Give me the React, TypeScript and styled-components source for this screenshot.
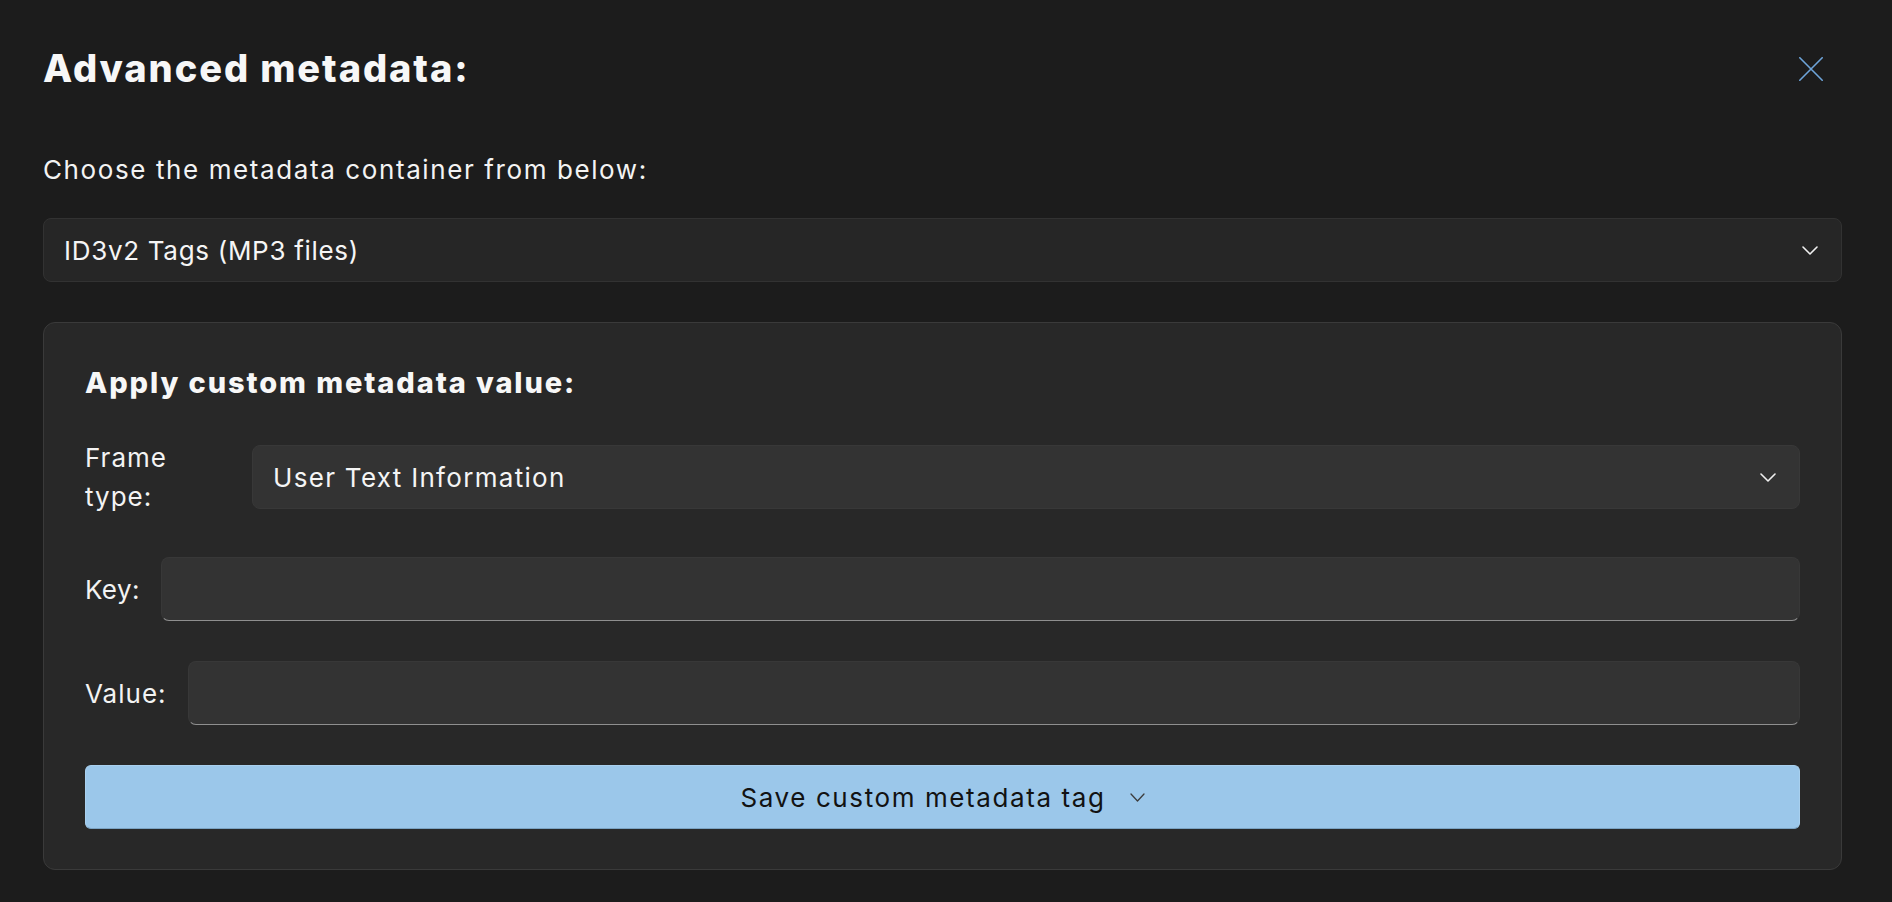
import React from "react";
import styled, { createGlobalStyle } from "styled-components";

const GlobalStyle = createGlobalStyle`
  html, body {
    margin: 0;
    padding: 0;
    background: #1c1c1c;
  }
  body {
    font-family: Inter, "Noto Sans", "Liberation Sans", sans-serif;
    color: #f5f5f5;
  }
  * { box-sizing: border-box; }
`;

const Page = styled.div`
  width: 1892px;
  min-height: 902px;
  padding: 44px 50px 0 43px;
  background: #1c1c1c;
  display: flex;
  flex-direction: column;
`;

const Header = styled.div`
  display: flex;
  align-items: center;
  justify-content: space-between;
`;

const Title = styled.h1`
  margin: 0;
  font-size: 38px;
  line-height: 49px;
  font-weight: 800;
  letter-spacing: 1.9px;
  color: #f7f7f7;
`;

const CloseButton = styled.button`
  width: 40px;
  height: 40px;
  margin-right: 11px;
  padding: 0;
  border: none;
  background: transparent;
  display: flex;
  align-items: center;
  justify-content: center;
  cursor: pointer;
`;

const Intro = styled.p`
  margin: 57px 0 0;
  font-size: 26px;
  line-height: 39px;
  font-weight: 400;
  letter-spacing: 1.6px;
  color: #f3f3f3;
`;

const SelectBox = styled.div<{ $tone: "dark" | "light" }>`
  height: 64px;
  flex: 1;
  display: flex;
  align-items: center;
  justify-content: space-between;
  padding: 0 23px 0 20px;
  border-radius: 8px;
  font-size: 26px;
  line-height: 39px;
  letter-spacing: ${(p) => (p.$tone === "dark" ? "0.7px" : "1.3px")};
  color: #f5f5f5;
  background: ${(p) => (p.$tone === "dark" ? "#262626" : "#333333")};
  border: 1px solid ${(p) => (p.$tone === "dark" ? "#323232" : "#383838")};
`;

const TopSelect = styled(SelectBox)`
  margin-top: 29px;
  flex: none;
`;

const Panel = styled.section`
  margin-top: 40px;
  padding: 41px 41px 40px 41px;
  background: #282828;
  border: 1px solid #3a3a3a;
  border-radius: 12px;
  display: flex;
  flex-direction: column;
`;

const PanelTitle = styled.h2`
  margin: 0 0 35px;
  font-size: 29px;
  line-height: 38px;
  font-weight: 800;
  letter-spacing: 1.9px;
  color: #f7f7f7;
`;

const Form = styled.div`
  display: flex;
  flex-direction: column;
  gap: 40px;
`;

const FieldRow = styled.div`
  display: flex;
  align-items: center;
  gap: 21px;
`;

const FieldLabel = styled.label<{ $basis?: number; $spacing?: number }>`
  flex: 0 0 ${(p) => (p.$basis ? `${p.$basis}px` : "auto")};
  font-size: 26px;
  line-height: 39px;
  letter-spacing: ${(p) => (p.$spacing ?? 1)}px;
  color: #f3f3f3;
  white-space: nowrap;
`;

const WrapText = styled.span`
  display: inline-block;
  width: min-content;
  padding: 1px 0;
  white-space: normal;
`;

const TextInput = styled.input`
  flex: 1;
  height: 64px;
  padding: 0 21px;
  border-radius: 8px;
  background: #333333;
  border: 1px solid #383838;
  border-bottom: 1px solid #8f8f8f;
  font-family: inherit;
  font-size: 26px;
  color: #f5f5f5;
  outline: none;
`;

const SaveButton = styled.button`
  height: 64px;
  width: 100%;
  display: flex;
  align-items: center;
  justify-content: center;
  gap: 24px;
  border-radius: 6px;
  background: #9bc7ea;
  border: 1px solid #a9d0ee;
  border-bottom: 1px solid #7ba3c3;
  font-family: inherit;
  font-size: 26px;
  line-height: 39px;
  letter-spacing: 1.6px;
  color: #121212;
  cursor: pointer;
`;

const Chevron = ({ color, w = 16, h = 9, sw = 1.6 }: { color: string; w?: number; h?: number; sw?: number }) => (
  <svg width={w} height={h} viewBox={`0 0 ${w} ${h}`} fill="none">
    <polyline
      points={`1,1 ${w / 2},${h - 1} ${w - 1},1`}
      stroke={color}
      strokeWidth={sw}
      strokeLinecap="round"
      strokeLinejoin="round"
    />
  </svg>
);

const CloseIcon = () => (
  <svg width="24" height="24" viewBox="0 0 24 24" fill="none">
    <path d="M0.8 0.8 L23.2 23.2 M23.2 0.8 L0.8 23.2" stroke="#6ea4d9" strokeWidth="1.6" strokeLinecap="round" />
  </svg>
);

export default function App() {
  return (
    <>
      <GlobalStyle />
      <Page>
        <Header>
          <Title>Advanced metadata:</Title>
          <CloseButton aria-label="Close">
            <CloseIcon />
          </CloseButton>
        </Header>
        <Intro>Choose the metadata container from below:</Intro>
        <TopSelect $tone="dark">
          <span>ID3v2 Tags (MP3 files)</span>
          <Chevron color="#f0f0f0" />
        </TopSelect>
        <Panel>
          <PanelTitle>Apply custom metadata value:</PanelTitle>
          <Form>
            <FieldRow>
              <FieldLabel $basis={146}>
                <WrapText>Frame type:</WrapText>
              </FieldLabel>
              <SelectBox $tone="light">
                <span>User Text Information</span>
                <Chevron color="#f0f0f0" />
              </SelectBox>
            </FieldRow>
            <FieldRow>
              <FieldLabel $spacing={0.4}>Key:</FieldLabel>
              <TextInput />
            </FieldRow>
            <FieldRow>
              <FieldLabel>Value:</FieldLabel>
              <TextInput />
            </FieldRow>
            <SaveButton>
              <span>Save custom metadata tag</span>
              <Chevron color="#3c3c3c" w={15} h={9} sw={1.3} />
            </SaveButton>
          </Form>
        </Panel>
      </Page>
    </>
  );
}
